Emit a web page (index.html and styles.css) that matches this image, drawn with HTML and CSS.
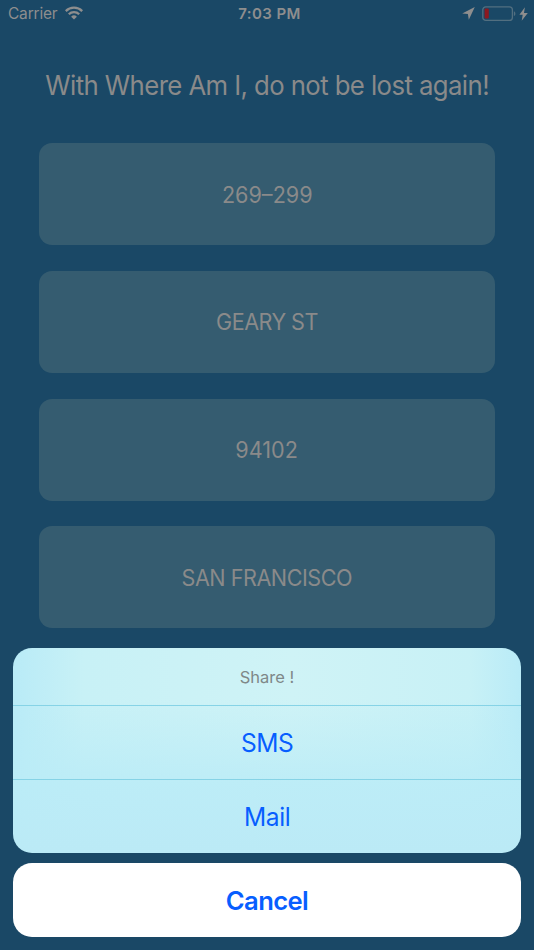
FILE: index.html
```html
<!DOCTYPE html>
<html lang="en">
<head>
<meta charset="utf-8">
<title>Where Am I</title>
<link rel="stylesheet" href="styles.css">
</head>
<body>
<main class="screen">
  <header class="status">
    <div class="status-left">
      <span class="carrier">Carrier</span>
      <svg class="wifi" width="18" height="14" viewBox="0 0 18 14" fill="none" stroke="#8e8e8e" stroke-width="2.3">
        <path d="M.8 5.1a11.6 11.6 0 0 1 16.4 0"/>
        <path d="M3.8 8.2a7.35 7.35 0 0 1 10.4 0"/>
        <path d="M9 13.6 6.1 10.7a4.1 4.1 0 0 1 5.8 0z" fill="#8e8e8e" stroke="none"/>
      </svg>
    </div>
    <span class="time">7:03 PM</span>
    <div class="status-right">
      <svg width="13" height="13" viewBox="0 0 13 13"><path d="M12.8 0 .2 6.4l5.7.7.9 5.6z" fill="#8e8e8e"/></svg>
      <svg width="34" height="16" viewBox="0 0 34 16">
        <rect x=".8" y=".8" width="29.6" height="13.6" rx="3" fill="none" stroke="#526f80" stroke-width="1.3"/>
        <rect x="2.6" y="2.6" width="4.2" height="10" rx="1" fill="#8c1820"/>
        <path d="M31.9 5.2c2 .7 2 4.1 0 4.8z" fill="#526f80"/>
      </svg>
      <svg width="9" height="14" viewBox="0 0 9 14"><path d="M5.9.2.4 7.7h3.3L2.7 13.8 8.8 5.9H5z" fill="#8e8e8e"/></svg>
    </div>
  </header>
  <h1 class="title"><span>With Where Am I, do not be lost again!</span></h1>
  <section class="cards">
    <div class="card"><span class="t-number">269–299</span></div>
    <div class="card"><span class="t-street">GEARY ST</span></div>
    <div class="card"><span class="t-zip">94102</span></div>
    <div class="card"><span class="t-city">SAN FRANCISCO</span></div>
  </section>
  <section class="sheet">
    <div class="sheet-title"><span>Share !</span></div>
    <div class="action"><span class="t-sms">SMS</span></div>
    <div class="action"><span class="t-mail">Mail</span></div>
  </section>
  <div class="cancel"><span>Cancel</span></div>
</main>
</body>
</html>
```
FILE: styles.css
```css
* { box-sizing: border-box; }
body { margin: 0; background: #1a4866; font-family: Inter, "Liberation Sans", sans-serif; }
.screen { width: 534px; height: 950px; overflow: hidden; display: flex; flex-direction: column; color: #8a8a8a; }
.status { height: 28px; display: grid; grid-template-columns: 1fr auto 1fr; align-items: center; padding: 0 6px 1px 8px; color: #8e8e8e; }
.status-left { display: flex; align-items: center; gap: 7.5px; }
.carrier { font-size: 15.5px; letter-spacing: -.2px; }
.wifi { display: block; margin-top: -1px; }
.time { padding-left: 3px; font-size: 15px; font-weight: 600; letter-spacing: .4px; }
.status-right { display: flex; align-items: center; justify-content: flex-end; gap: 3px; }
.status-right svg:first-child { margin-right: 4.5px; }
.title { margin: 0; height: 115px; padding-bottom: 2px; display: flex; align-items: center; justify-content: center; font-size: 26.8px; font-weight: 400; letter-spacing: -.6px; white-space: nowrap; }
.title span, .card span, .action span { transform: scaleX(.96); }
.cards { padding: 0 39px; display: grid; gap: 25.8px; }
.card { height: 102px; border-radius: 13px; background: #355c70; display: flex; align-items: center; justify-content: center; font-size: 22.5px; }
.t-street { letter-spacing: -.55px; }
.t-city { letter-spacing: -.5px; }
.sheet { margin: 20px 13px 0; height: 204.5px; flex: none; border-radius: 19px; overflow: hidden;
  background:
    linear-gradient(to bottom, rgba(185, 234, 246, 0) 25%, rgba(187, 236, 247, .9) 66%, #bbeaf6 100%),
    linear-gradient(to right, #b9ebf7 0, #c8f1f6 14%, #cff3f6 55%, #c8f1f6 90%, #b9ebf7 100%); }
.sheet-title { height: 57px; display: flex; align-items: center; justify-content: center; font-size: 16.5px; color: #7f8888; }
.action { height: 74px; border-top: 1px solid #86d3e6; display: flex; align-items: center; justify-content: center; font-size: 25.6px; color: #075eff; }
.t-sms { letter-spacing: -.5px; }
.t-mail { letter-spacing: -.4px; }
.cancel { margin: 10.3px 13px 0; height: 74px; flex: none; border-radius: 19px; background: #fff; color: #075eff; display: flex; align-items: center; justify-content: center; font-size: 25.6px; font-weight: 600; letter-spacing: -.6px; }
```
